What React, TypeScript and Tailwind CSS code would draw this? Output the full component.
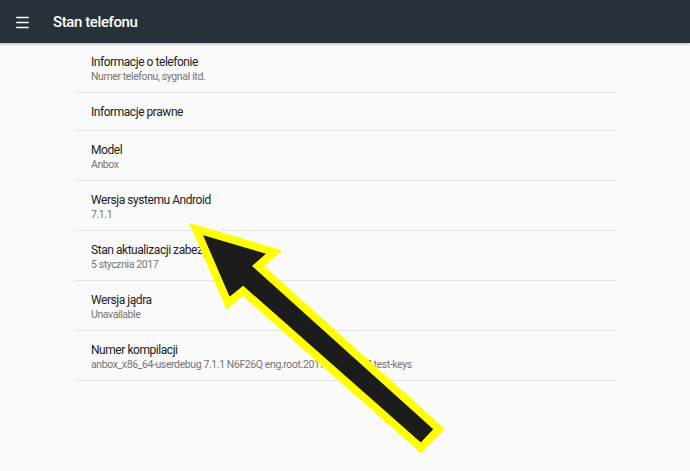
import { Menu } from "lucide-react";

const rows: { title: string; sub?: string }[] = [
  { title: "Informacje o telefonie", sub: "Numer telefonu, sygnał itd." },
  { title: "Informacje prawne" },
  { title: "Model", sub: "Anbox" },
  { title: "Wersja systemu Android", sub: "7.1.1" },
  { title: "Stan aktualizacji zabezpieczeń", sub: "5 stycznia 2017" },
  { title: "Wersja jądra", sub: "Unavailable" },
  {
    title: "Numer kompilacji",
    sub: "anbox_x86_64-userdebug 7.1.1 N6F26Q eng.root.20170105.1327 test-keys",
  },
];

function Arrow() {
  return (
    <svg
      className="absolute left-0 top-0 pointer-events-none"
      width={690}
      height={471}
      viewBox="0 0 690 471"
    >
      <polygon
        points="196,229 274,252 258,266 439,429 421,448 243,291 228,303"
        fill="#1c1c1c"
        stroke="#ffff00"
        strokeWidth={8}
        strokeLinejoin="miter"
      />
    </svg>
  );
}

export default function App() {
  return (
    <div
      className="relative w-[690px] h-[471px] overflow-hidden bg-[#fafafa]"
      style={{ fontFamily: "Roboto, 'Liberation Sans', sans-serif" }}
    >
      <header className="h-[43px] bg-[#263238] flex items-center shadow-[0_1px_3px_rgba(0,0,0,0.3)] relative z-10">
        <div className="w-[53px] flex justify-center pr-[8px] pt-[1px]">
          <Menu className="text-white" size={17} strokeWidth={2.2} />
        </div>
        <h1 className="text-white text-[15px] font-medium tracking-[-0.4px] pt-[1px]">
          Stan telefonu
        </h1>
      </header>

      <div className="mx-[74px] w-[542px]">
        {rows.map((r) => (
          <div
            key={r.title}
            className={`border-b border-[#e5e5e5] pl-[17px] flex flex-col justify-center ${
              r.sub ? "h-[50px] pt-[3px]" : "h-[38px] pt-[2px]"
            }`}
          >
            <div className="text-[12px] leading-[15px] tracking-[-0.45px] text-[#212121] whitespace-nowrap">
              {r.title}
            </div>
            {r.sub && (
              <div className="text-[10.5px] leading-[14px] tracking-[-0.4px] text-[#757575] whitespace-nowrap">
                {r.sub}
              </div>
            )}
          </div>
        ))}
      </div>

      <Arrow />
    </div>
  );
}
